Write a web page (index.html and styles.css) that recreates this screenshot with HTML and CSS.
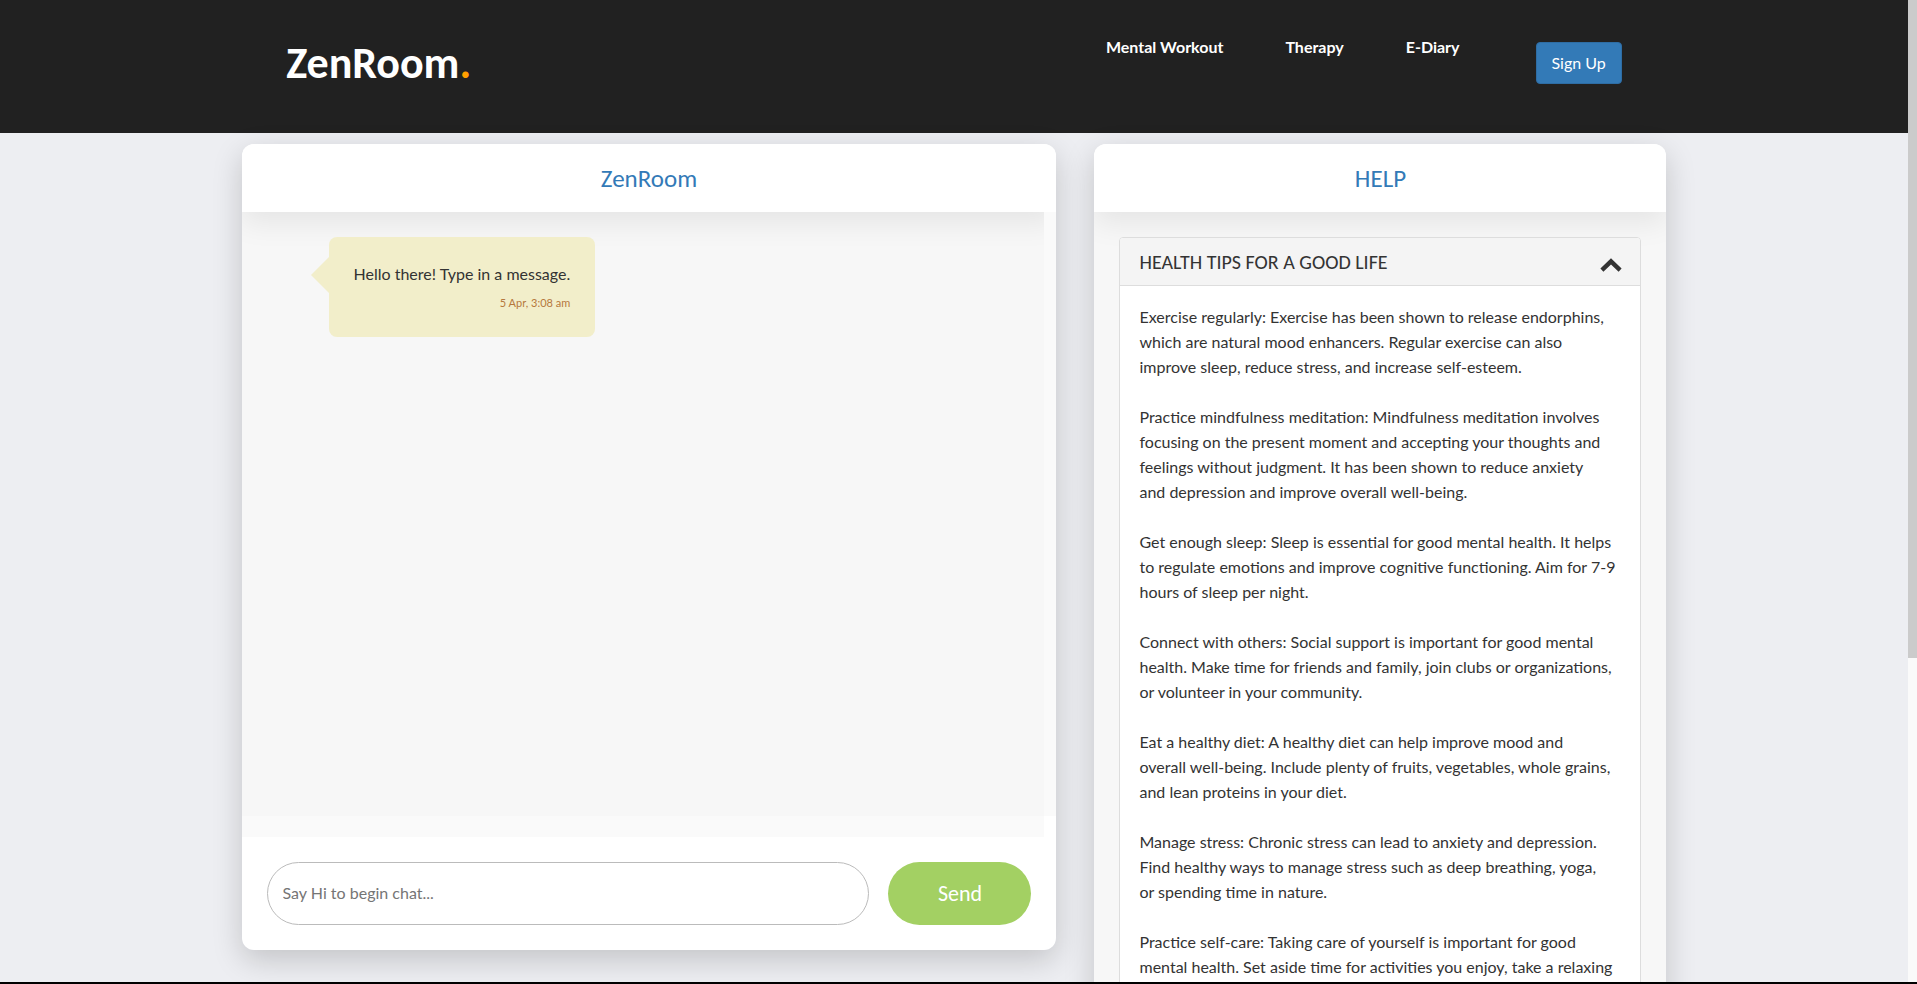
FILE: index.html
```html
<!DOCTYPE html>
<html lang="en">
<head>
<meta charset="utf-8">
<title>ZenRoom</title>
<link rel="stylesheet" href="styles.css">
</head>
<body>
<div class="viewport">
  <div class="page">
    <header class="site-header">
      <a class="logo" href="#">ZenRoom<span class="logo-dot">.</span></a>
      <nav class="site-nav">
        <a class="nav-link" href="#">Mental Workout</a>
        <a class="nav-link" href="#">Therapy</a>
        <a class="nav-link" href="#">E-Diary</a>
        <button class="signup" type="button">Sign Up</button>
      </nav>
    </header>
    <main class="columns">
      <section class="card chat">
        <h2 class="card-title"><a href="#">ZenRoom</a></h2>
        <div class="chat-body">
          <div class="messages">
            <div class="bubble">
              <p class="bubble-text">Hello there! Type in a message.</p>
              <time class="bubble-time">5 Apr, 3:08 am</time>
            </div>
          </div>
          <div class="messages-track"></div>
        </div>
        <form class="composer">
          <input class="composer-input" type="text" placeholder="Say Hi to begin chat..." aria-label="Message">
          <button class="send" type="button">Send</button>
        </form>
      </section>
      <section class="card help">
        <h2 class="card-title"><a href="#">HELP</a></h2>
        <div class="help-body">
          <article class="tips">
            <button class="tips-heading" type="button" aria-expanded="true">
              <span>HEALTH TIPS FOR A GOOD LIFE</span>
              <svg class="chevron" viewBox="0 0 22 14" aria-hidden="true"><path d="M11 0.3 21.6 10.6 18.6 13.8 11 6.6 3.4 13.8 0.4 10.6Z"/></svg>
            </button>
            <div class="tips-text">
              <p>Exercise regularly: Exercise has been shown to release endorphins,<br>which are natural mood enhancers. Regular exercise can also<br>improve sleep, reduce stress, and increase self-esteem.</p>
              <p>Practice mindfulness meditation: Mindfulness meditation involves<br>focusing on the present moment and accepting your thoughts and<br>feelings without judgment. It has been shown to reduce anxiety<br>and depression and improve overall well-being.</p>
              <p>Get enough sleep: Sleep is essential for good mental health. It helps<br>to regulate emotions and improve cognitive functioning. Aim for 7-9<br>hours of sleep per night.</p>
              <p>Connect with others: Social support is important for good mental<br>health. Make time for friends and family, join clubs or organizations,<br>or volunteer in your community.</p>
              <p>Eat a healthy diet: A healthy diet can help improve mood and<br>overall well-being. Include plenty of fruits, vegetables, whole grains,<br>and lean proteins in your diet.</p>
              <p>Manage stress: Chronic stress can lead to anxiety and depression.<br>Find healthy ways to manage stress such as deep breathing, yoga,<br>or spending time in nature.</p>
              <p>Practice self-care: Taking care of yourself is important for good<br>mental health. Set aside time for activities you enjoy, take a relaxing</p>
            </div>
          </article>
        </div>
      </section>
    </main>
  </div>
  <div class="scrollbar" aria-hidden="true"><div class="scrollbar-thumb"></div></div>
</div>
</body>
</html>
```
FILE: styles.css
```css
* { box-sizing: border-box; }

body {
  margin: 0;
  font-family: Lato, Carlito, sans-serif;
  font-size: 16px;
  line-height: 25px;
  color: #333;
  background: #edeef2;
}

a { color: inherit; text-decoration: none; }
p, h2 { margin: 0; }
button, input { font-family: inherit; font-size: inherit; }

.logo, .card-title, .tips-heading, .send { font-family: Carlito, Lato, sans-serif; }

.viewport {
  display: flex;
  height: 100vh;
  overflow: hidden;
  border-bottom: 2px solid #000;
}

.page { flex: 1; min-width: 0; }

.site-header {
  display: flex;
  justify-content: space-between;
  height: 133px;
  padding: 34px 15% 0;
  background: #212121;
  color: #fff;
}

.logo {
  font-size: 44px;
  font-weight: 700;
  line-height: 58px;
}

.logo-dot { color: #ff9f00; }

.site-nav { display: flex; align-items: flex-start; gap: 62px; }
.nav-link { font-weight: 700; }
.nav-link:last-of-type { margin-right: 14px; }

.signup {
  height: 42px;
  margin-top: 8px;
  padding: 0 15px 2px;
  border: 1px solid #2e6da4;
  border-radius: 4px;
  background: #337ab7;
  color: #fff;
}

.columns {
  display: grid;
  grid-template-columns: 815fr 572fr;
  align-items: start;
  gap: 38px;
  width: 74.68%;
  margin: 11px auto 0;
}

.card {
  border-radius: 12px;
  overflow: hidden;
  background: #fff;
  box-shadow: 0 10px 30px rgba(0, 0, 0, 0.18);
}

.card-title {
  position: relative;
  z-index: 1;
  padding: 21px 20px 19px;
  background: #fff;
  box-shadow: 0 10px 30px rgba(0, 0, 0, 0.08);
  color: #337ab7;
  font-size: 25px;
  font-weight: 400;
  line-height: 28px;
  text-align: center;
}

.chat-body { display: flex; align-items: flex-start; }

.messages {
  flex: 1;
  height: 625px;
  padding: 25px 87px;
  background: linear-gradient(#f7f7f7, #f7f7f7) top / 100% 604px no-repeat #fafafa;
}

.messages-track {
  position: relative;
  z-index: 2;
  width: 12px;
  height: 604px;
  background: #fafafa;
}

.bubble {
  position: relative;
  z-index: 2;
  width: max-content;
  padding: 24px 25px 22px;
  border-radius: 8px;
  background: #f2eeca;
}

.bubble::before {
  content: "";
  position: absolute;
  top: 20px;
  right: 100%;
  border: 18px solid transparent;
  border-left-width: 0;
  border-right-color: #f2eeca;
}

.bubble-text { margin-bottom: 4px; }

.bubble-time {
  display: block;
  color: #b5783c;
  font-size: 11px;
  text-align: right;
}

.composer { display: flex; gap: 19px; padding: 25px; }

.composer-input {
  flex: 1;
  min-width: 0;
  height: 63px;
  padding: 0 15px 2px;
  border: 1px solid #bbb;
  border-radius: 32px;
  background: #fff;
  color: #333;
}

.composer-input::placeholder { color: #757575; }

.send {
  width: 143px;
  border: 0;
  border-radius: 32px;
  background: #a3d063;
  color: #fff;
  font-size: 22px;
}

.help-body { padding: 25px; background: #f7f7f7; }

.tips {
  position: relative;
  z-index: 2;
  border: 1px solid #ddd;
  border-radius: 4px;
  overflow: hidden;
  background: #fff;
}

.tips-heading {
  display: flex;
  align-items: center;
  justify-content: space-between;
  width: 100%;
  height: 48px;
  padding: 0 18px 0 19px;
  border: 0;
  border-bottom: 1px solid #ddd;
  background: #f4f4f4;
  color: #333;
  font-size: 20px;
}

.chevron { width: 22px; height: 14px; margin-top: 6px; fill: #333; }

.tips-text {
  display: grid;
  gap: 25px;
  padding: 18px 0 25px 19px;
  white-space: nowrap;
}

.scrollbar { width: 9px; background: #fafafa; }
.scrollbar-thumb { height: 67%; background: #cbcbcb; }
```
